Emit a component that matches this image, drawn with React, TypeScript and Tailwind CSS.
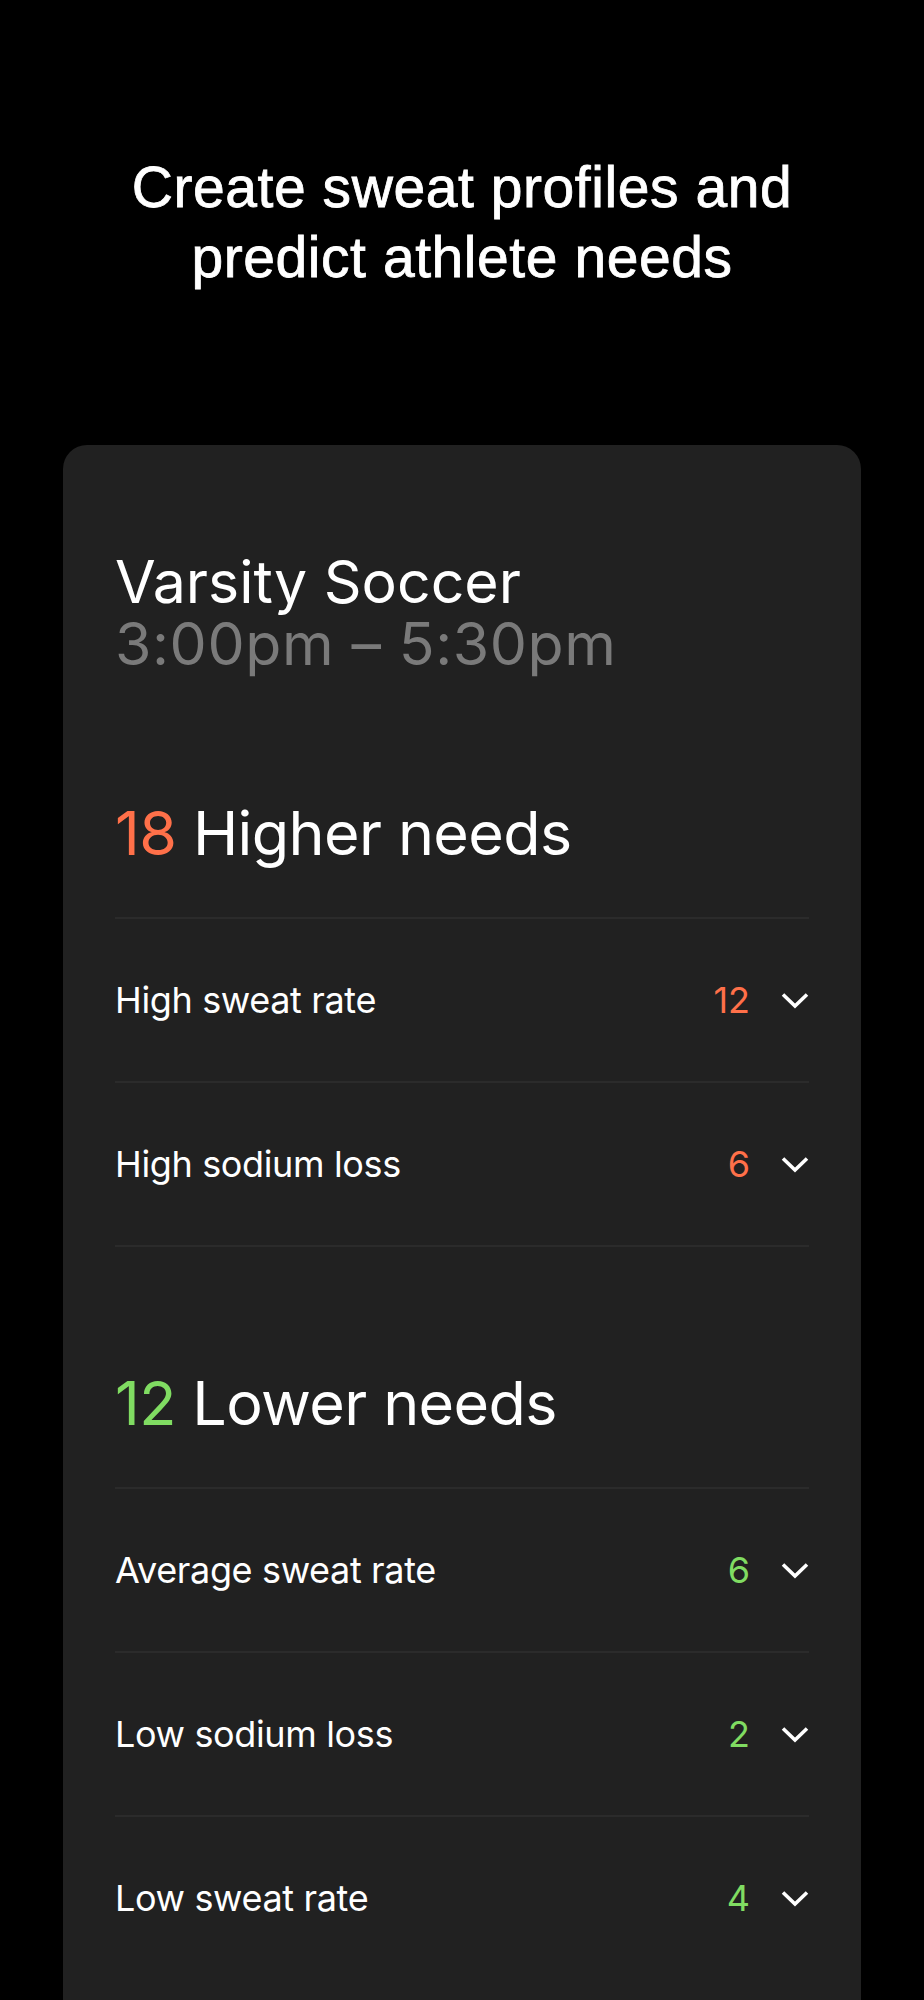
import React from 'react';

type Need = {
  label: string;
  count: number;
};

const higher: Need[] = [
  { label: 'High sweat rate', count: 12 },
  { label: 'High sodium loss', count: 6 },
];

const lower: Need[] = [
  { label: 'Average sweat rate', count: 6 },
  { label: 'Low sodium loss', count: 2 },
  { label: 'Low sweat rate', count: 4 },
];

function Chevron() {
  return (
    <svg width="28" height="17" viewBox="0 0 28 17" fill="none" className="shrink-0">
      <polyline points="2,2.5 14,14 26,2.5" stroke="white" strokeWidth="3.6" strokeLinejoin="miter" />
    </svg>
  );
}

interface SectionProps {
  total: number;
  title: string;
  items: Need[];
  accent: string;
  closed?: boolean;
}

function NeedsSection({ total, title, items, accent, closed = false }: SectionProps) {
  return (
    <section>
      <h2 className="text-[61px] leading-[62px] tracking-[-0.01em] text-white">
        <span className={accent}>{total}</span> {title}
      </h2>
      <ul className={`mt-[53px] ${closed ? 'border-b-2 border-[#2b2b2b]' : ''}`}>
        {items.map((item) => (
          <li
            key={item.label}
            className="flex h-[164px] items-center justify-between border-t-2 border-[#2b2b2b]"
          >
            <span className="text-[36px] leading-none tracking-[-0.01em] text-white">{item.label}</span>
            <div className="flex items-center gap-[31px]">
              <span className={`text-[36px] leading-none ${accent}`}>{item.count}</span>
              <Chevron />
            </div>
          </li>
        ))}
      </ul>
    </section>
  );
}

export default function App() {
  return (
    <div className="min-h-[2000px] overflow-hidden bg-black pb-10">
      <h1
        className="pt-[152px] text-center text-[57px] leading-[70px] tracking-[0.01em] text-white [-webkit-text-stroke:0.8px_white]"
        style={{ fontFamily: '"Liberation Sans", Arial, sans-serif' }}
      >
        Create sweat profiles and
        <br />
        predict athlete needs
      </h1>

      <div
        className="mx-[63px] mt-[153px] rounded-[24px] bg-[#212121] px-[52px] pt-[106px] pb-[60px]"
        style={{ fontFamily: 'Inter, "Noto Sans", sans-serif' }}
      >
        <div className="text-[59px] leading-[62px]">
          <div className="text-white">Varsity Soccer</div>
          <div className="tracking-[0.01em] text-[#7a7a7a]">3:00pm – 5:30pm</div>
        </div>

        <div className="mt-[127px]">
          <NeedsSection total={18} title="Higher needs" items={higher} accent="text-[#ff7049]" closed />
        </div>

        <div className="mt-[125px]">
          <NeedsSection total={12} title="Lower needs" items={lower} accent="text-[#80dc62]" />
        </div>
      </div>
    </div>
  );
}
